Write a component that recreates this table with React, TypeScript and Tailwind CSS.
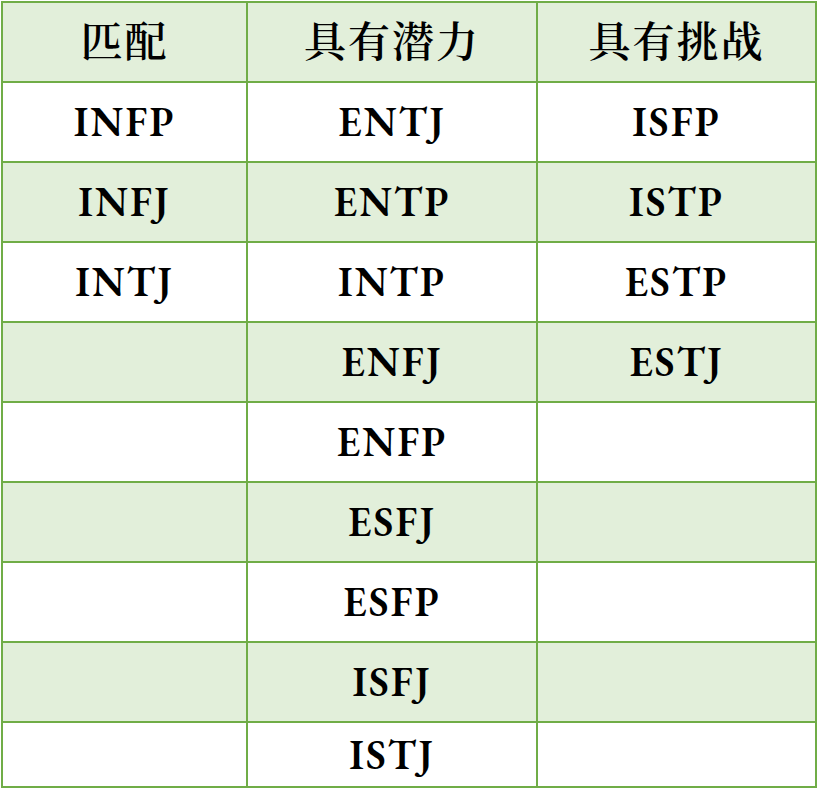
import React from "react";

const headers = ["匹配", "具有潜力", "具有挑战"];
const rows: [string, string, string][] = [
  ["INFP", "ENTJ", "ISFP"],
  ["INFJ", "ENTP", "ISTP"],
  ["INTJ", "INTP", "ESTP"],
  ["", "ENFJ", "ESTJ"],
  ["", "ENFP", ""],
  ["", "ESFJ", ""],
  ["", "ESFP", ""],
  ["", "ISFJ", ""],
  ["", "ISTJ", ""],
];

export default function App() {
  return (
    <div className="w-[820px] h-[788px] bg-white overflow-hidden font-['EB_Garamond','Noto_Serif_CJK_SC','Noto_Serif_SC','AR_PL_UMing_CN',serif]">
      <div className="ml-[1px] mt-[1px] w-[816px] grid grid-cols-[245px_290px_279px] border-l-[2px] border-t-[2px] border-[#70ad47] text-black">
        {headers.map((h) => (
          <div
            key={h}
            className="h-[80px] flex items-center justify-center bg-[#e2efda] border-r-[2px] border-b-[2px] border-[#70ad47] text-[42px] font-semibold tracking-[2px]"
          >
            {h}
          </div>
        ))}
        {rows.map((r, i) =>
          r.map((c, j) => (
            <div
              key={`${i}-${j}`}
              className={`${i === rows.length - 1 ? "h-[65px]" : "h-[80px]"} flex items-center justify-center border-r-[2px] border-b-[2px] border-[#70ad47] text-[41px] font-semibold tracking-[2px] ${i % 2 === 1 ? "bg-[#e2efda]" : "bg-white"}`}
            >
              {c}
            </div>
          ))
        )}
      </div>
    </div>
  );
}
